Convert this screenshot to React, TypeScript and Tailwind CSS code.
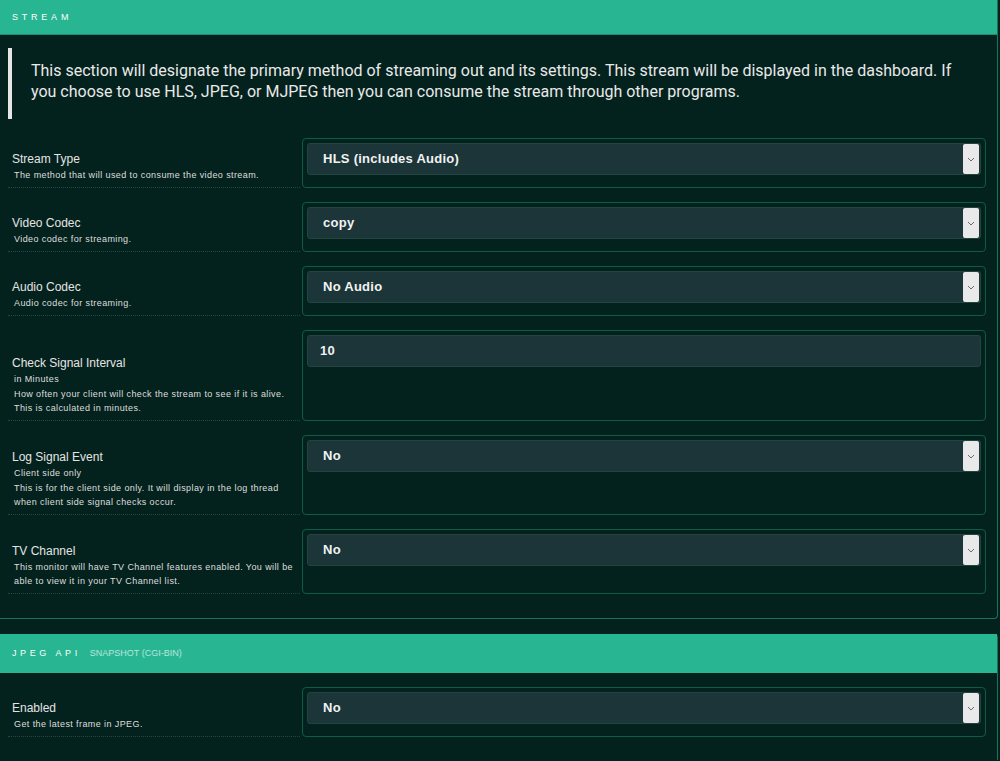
import React from 'react';

type Row = {
  label: string;
  desc: string[];
  value: string;
  kind: 'select' | 'input';
  h: string;
};

const streamRows: Row[] = [
  { label: 'Stream Type', desc: ['The method that will used to consume the video stream.'], value: 'HLS (includes Audio)', kind: 'select', h: 'h-[50px]' },
  { label: 'Video Codec', desc: ['Video codec for streaming.'], value: 'copy', kind: 'select', h: 'h-[50px]' },
  { label: 'Audio Codec', desc: ['Audio codec for streaming.'], value: 'No Audio', kind: 'select', h: 'h-[50px]' },
  {
    label: 'Check Signal Interval',
    desc: ['in Minutes', 'How often your client will check the stream to see if it is alive.', 'This is calculated in minutes.'],
    value: '10',
    kind: 'input',
    h: 'h-[91px]',
  },
  {
    label: 'Log Signal Event',
    desc: ['Client side only', 'This is for the client side only. It will display in the log thread', 'when client side signal checks occur.'],
    value: 'No',
    kind: 'select',
    h: 'h-[80px]',
  },
  {
    label: 'TV Channel',
    desc: ['This monitor will have TV Channel features enabled. You will be', 'able to view it in your TV Channel list.'],
    value: 'No',
    kind: 'select',
    h: 'h-[65px]',
  },
];

const jpegRows: Row[] = [
  { label: 'Enabled', desc: ['Get the latest frame in JPEG.'], value: 'No', kind: 'select', h: 'h-[50px]' },
];

function Field({ row }: { row: Row }) {
  return (
    <div className={`flex ${row.h}`}>
      {/* label column */}
      <div className="ml-2 w-[292px] flex flex-col justify-end pb-[4px] border-b border-dotted border-[#1d4a3f]">
        <div className="pl-1 text-[12px] leading-[17px] text-[#e4e4e4]">{row.label}</div>
        {row.desc.map((d) => (
          <div key={d} className="pl-[6px] text-[9px] leading-[14.7px] tracking-[0.045em] text-[#dedede]">
            {d}
          </div>
        ))}
      </div>

      {/* control box */}
      <div className="ml-[2px] mr-[11px] flex-1 rounded-[4px] border border-[#0f5b45] px-[4px] pt-[4px]">
        <div className="flex h-[32px] items-center rounded-[3px] border border-[#23453f] bg-[#1b3538]">
          <span className={`${row.kind === 'input' ? 'pl-[12px]' : 'pl-[15px]'} flex-1 text-[13px] font-bold tracking-[0.02em] text-[#f2f2f2]`}>
            {row.value}
          </span>
          {row.kind === 'select' && (
            <div className="mr-[1px] flex h-[30px] w-[16px] items-center justify-center rounded-[2px] bg-[#e9e9e9]">
              <svg width="8" height="5" viewBox="0 0 8 5" fill="none">
                <path d="M1 1l3 3 3-3" stroke="#6b6b6b" strokeWidth="1" />
              </svg>
            </div>
          )}
        </div>
      </div>
    </div>
  );
}

export default function App() {
  return (
    <div className="min-h-[761px] bg-[#04221d] font-['Liberation_Sans',Arial,sans-serif] overflow-hidden">
      {/* Stream panel */}
      <section className="mr-[2px] rounded-br-[4px] border-r border-b border-[#1b7459] pb-[24px]">
        <header className="flex h-[35px] items-center border-b border-[#1c8f72] bg-[#27b592] pl-3 pt-[1px]">
          <span className="text-[9px] tracking-[0.42em] text-white">STREAM</span>
        </header>

        <div className="mt-[13px] ml-2 flex border-l-4 border-[#e6e6e6] pt-[12px] pb-[17px] pr-[40px] pl-[19px]">
          <p className="font-['Roboto',sans-serif] text-[16px] leading-[21px] text-[#e9e9e9]">
            This section will designate the primary method of streaming out and its settings. This stream will be displayed in the dashboard. If you choose to use HLS, JPEG, or MJPEG then you can consume the stream through other programs.
          </p>
        </div>

        <div className="mt-[19px] flex flex-col gap-[14px]">
          {streamRows.map((r) => (
            <Field key={r.label} row={r} />
          ))}
        </div>
      </section>

      {/* JPEG API panel */}
      <section className="mt-[15px] mr-[2px] rounded-tr-[4px] border-r border-[#1b7459] pb-[23px]">
        <header className="flex h-[39px] items-center gap-[9px] bg-[#27b592] pl-3">
          <span className="text-[9px] tracking-[0.4em] text-white">JPEG API</span>
          <span className="text-[9px] text-white/65">SNAPSHOT (CGI-BIN)</span>
        </header>
        <div className="mt-[14px] flex flex-col gap-[14px]">
          {jpegRows.map((r) => (
            <Field key={r.label} row={r} />
          ))}
        </div>
      </section>
    </div>
  );
}
